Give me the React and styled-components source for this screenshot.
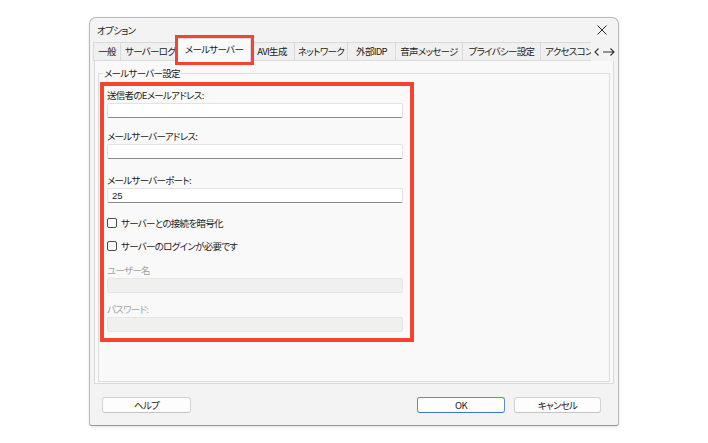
import React from "react";
import styled, { createGlobalStyle, css } from "styled-components";

const Global = createGlobalStyle`
  html, body { margin: 0; padding: 0; background: #ffffff; }
  body { font-family: "Noto Sans CJK JP", "Noto Sans", sans-serif; color: #1b1b1b; }
  * { box-sizing: border-box; }
`;

const RED = "#f4432f";

const uiText = css`
  font-size: 9.5px;
  letter-spacing: -0.7px;
  font-feature-settings: "palt";
`;

const Page = styled.div`
  width: 708px;
  height: 443px;
  padding: 17px 0 0 89px;
`;

const Window = styled.div`
  width: 530px;
  height: 409px;
  background: #f3f3f3;
  border: 1px solid #b9b9b9;
  border-bottom-color: #9a9a9a;
  border-radius: 7px 7px 3px 3px;
  box-shadow: 0 1px 3px rgba(0, 0, 0, 0.12);
  display: flex;
  flex-direction: column;
`;

const TitleBar = styled.div`
  height: 24px;
  display: flex;
  align-items: center;
  justify-content: space-between;
  padding: 0 10px 0 7px;
`;

const Title = styled.span`
  ${uiText}
  line-height: 12px;
  margin-top: -1px;
`;

const CloseButton = styled.div`
  width: 12px;
  height: 12px;
  display: flex;
  align-items: center;
  justify-content: center;
`;

const TabStrip = styled.div`
  height: 19px;
  margin-left: 3px;
  margin-right: 1px;
  display: flex;
  align-items: flex-end;
  position: relative;
  z-index: 2;
`;

const Tab = styled.div`
  ${uiText}
  flex: none;
  width: ${(p) => p.$w}px;
  height: ${(p) => (p.$selected ? 24 : 19)}px;
  margin: ${(p) => (p.$selected ? "0 -1px -1px -1px" : "0")};
  background: ${(p) => (p.$selected ? "#f9f9f9" : "#f0f0f0")};
  border: 1px solid #dadada;
  border-left: ${(p) => (p.$first ? "1px solid #dadada" : "none")};
  border-bottom: ${(p) => (p.$selected ? "none" : "1px solid #dadada")};
  outline: ${(p) => (p.$selected ? `3px solid ${RED}` : "none")};
  position: relative;
  z-index: ${(p) => (p.$selected ? 3 : 1)};
  line-height: 17px;
  white-space: nowrap;
  overflow: hidden;
  text-align: ${(p) => (p.$left ? "left" : "center")};
  padding-left: ${(p) => (p.$left ? 4 : 0)}px;
  padding-top: ${(p) => (p.$selected ? 2 : 0)}px;
`;

const Scroller = styled.div`
  flex: none;
  width: 26px;
  height: 19px;
  background: #f3f3f3;
  display: flex;
  align-items: center;
  justify-content: flex-start;
  padding-left: 2px;
  gap: 1px;
  margin-left: -4px;
  position: relative;
  z-index: 2;
`;

const TabPage = styled.div`
  margin: -1px 4px 0 4px;
  height: 324px;
  background: #f9f9f9;
  border: 1px solid #dadada;
  padding: 6px 3px 1px 3px;
  display: flex;
`;

const GroupBox = styled.fieldset`
  flex: 1;
  margin: 0;
  padding: 3px 0 0 1px;
  border: 1px solid #dcdcdc;
  min-width: 0;
`;

const Legend = styled.legend`
  ${uiText}
  line-height: 12px;
  padding: 0 1px;
  margin-left: 3px;
`;

const Highlight = styled.div`
  width: 314px;
  height: 260px;
  border: 4px solid ${RED};
  padding: 3px 7px 0 3px;
  display: flex;
  flex-direction: column;
`;

const Label = styled.div`
  ${uiText}
  line-height: 12px;
  height: 12px;
  margin-top: ${(p) => p.$mt || 0}px;
  margin-bottom: 2px;
  color: ${(p) => (p.$disabled ? "#a3a3a3" : "#1b1b1b")};
`;

const Input = styled.div`
  height: 15px;
  background: ${(p) => (p.$disabled ? "#f0f0ef" : "#ffffff")};
  border: 1px solid ${(p) => (p.$disabled ? "#e6e6e4" : "#e3e3e3")};
  border-bottom: 1px solid ${(p) => (p.$disabled ? "#e6e6e4" : "#8a8a8a")};
  border-radius: 2px;
  font-size: 9.5px;
  line-height: 13px;
  padding-left: 4px;
  font-family: "Liberation Sans", "Noto Sans", sans-serif;
`;

const CheckRow = styled.div`
  ${uiText}
  display: flex;
  align-items: center;
  height: 12px;
  margin-top: ${(p) => p.$mt || 0}px;
  line-height: 12px;
`;

const Box = styled.span`
  width: 10px;
  height: 10px;
  border: 1px solid #4a4a4a;
  border-radius: 2px;
  background: #ffffff;
  margin-right: 4px;
  flex: none;
`;

const Footer = styled.div`
  display: flex;
  align-items: center;
  padding: 13px 17px 0 12px;
`;

const Button = styled.div`
  ${uiText}
  width: ${(p) => p.$w}px;
  height: 16px;
  margin-left: ${(p) => p.$ml || 0}px;
  background: #fdfdfd;
  border: 1px solid ${(p) => (p.$primary ? "#5b8fc6" : "#d3d3d3")};
  border-bottom-color: ${(p) => (p.$primary ? "#3f78b8" : "#c4c4c4")};
  border-radius: 3px;
  line-height: 14px;
  text-align: center;
`;

const Spacer = styled.div`
  flex: 1;
`;

const tabs = [
  { label: "一般", w: 28, first: true },
  { label: "サーバーログ", w: 58, left: true },
  { label: "メールサーバー", w: 73, selected: true },
  { label: "AVI生成", w: 45 },
  { label: "ネットワーク", w: 53 },
  { label: "外部IDP", w: 48 },
  { label: "音声メッセージ", w: 67 },
  { label: "プライバシー設定", w: 78 },
  { label: "アクセスコン", w: 54, left: true },
];

export default function App() {
  return (
    <>
      <Global />
      <Page>
        <Window>
          <TitleBar>
            <Title>オプション</Title>
            <CloseButton>
              <svg width="10" height="10" viewBox="0 0 10 10">
                <path d="M0.5 0.5 L9.5 9.5 M9.5 0.5 L0.5 9.5" stroke="#2b2b2b" strokeWidth="1" fill="none" />
              </svg>
            </CloseButton>
          </TitleBar>
          <TabStrip>
            {tabs.map((t) => (
              <Tab key={t.label} $w={t.w} $selected={t.selected} $first={t.first} $left={t.left}>
                {t.label}
              </Tab>
            ))}
            <Scroller>
              <svg width="8" height="10" viewBox="0 0 8 10">
                <path d="M5.5 1.5 L2 5 L5.5 8.5" stroke="#333" strokeWidth="1.1" fill="none" />
              </svg>
              <svg width="14" height="10" viewBox="0 0 14 10">
                <path d="M1 5 H12 M8.5 1.5 L12 5 L8.5 8.5" stroke="#333" strokeWidth="1.1" fill="none" />
              </svg>
            </Scroller>
          </TabStrip>
          <TabPage>
            <GroupBox>
              <Legend>メールサーバー設定</Legend>
              <Highlight>
                <Label>送信者のEメールアドレス:</Label>
                <Input />
                <Label $mt={12}>メールサーバーアドレス:</Label>
                <Input />
                <Label $mt={15}>メールサーバーポート:</Label>
                <Input>25</Input>
                <CheckRow $mt={14}>
                  <Box />
                  サーバーとの接続を暗号化
                </CheckRow>
                <CheckRow $mt={11}>
                  <Box />
                  サーバーのログインが必要です
                </CheckRow>
                <Label $mt={12} $disabled>ユーザー名</Label>
                <Input $disabled />
                <Label $mt={10} $disabled>パスワード:</Label>
                <Input $disabled />
              </Highlight>
            </GroupBox>
          </TabPage>
          <Footer>
            <Button $w={89}>ヘルプ</Button>
            <Spacer />
            <Button $w={88} $primary>OK</Button>
            <Button $w={87} $ml={9}>キャンセル</Button>
          </Footer>
        </Window>
      </Page>
    </>
  );
}
